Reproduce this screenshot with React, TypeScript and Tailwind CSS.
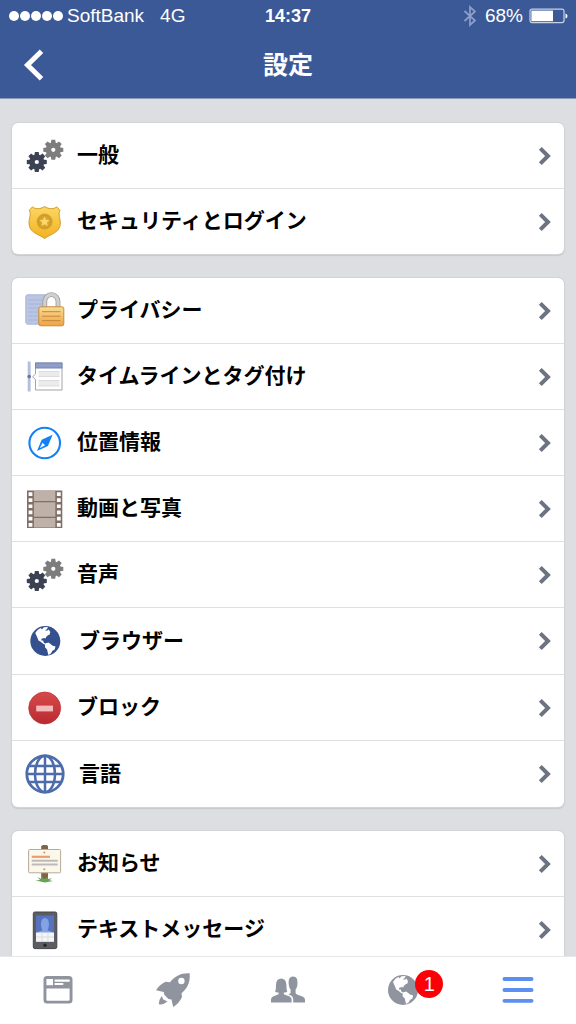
import React from 'react';

interface Item {
  id: string;
  label: string;
  icon: React.ReactNode;
  large?: boolean;
}

const TEETH = [0, 45, 90, 135, 180, 225, 270, 315];

const Gear: React.FC<{ x: number; y: number; fill: string }> = ({ x, y, fill }) => (
  <g transform={`translate(${x} ${y})`}>
    {TEETH.map(angle => (
      <path key={angle} d="M-2.6 -6 L-1.9 -10 H1.9 L2.6 -6 Z" fill={fill} transform={`rotate(${angle})`} />
    ))}
    <circle r="7.4" fill={fill} />
    <circle r="2.1" fill="#fff" />
  </g>
);

const Icon: React.FC<{ children: React.ReactNode }> = ({ children }) => (
  <svg viewBox="0 0 40 40" className="w-10 h-10 shrink-0" fill="none" aria-hidden="true">
    {children}
  </svg>
);

const GearsIcon = () => (
  <Icon>
    <Gear x={28.3} y={13.8} fill="#7d7d7d" />
    <Gear x={11.8} y={26} fill="#3c4253" />
  </Icon>
);

const BadgeIcon = () => (
  <Icon>
    <defs>
      <linearGradient id="badge" x1="0" y1="0" x2="0" y2="1">
        <stop offset="0" stopColor="#fbd763" />
        <stop offset="1" stopColor="#f2b21f" />
      </linearGradient>
    </defs>
    <path
      d="M7.5 4.8 C10 7.3 15 7.4 19.6 4.6 C24 7.4 29 7.3 31.7 4.8 L35 8.3 C32.8 12.5 35.3 16 35.3 21 C35.3 31 25 32 19.6 36.6 C14 32 4 31 4 21 C4 16 6.5 12.5 4.3 8.3 Z"
      fill="url(#badge)"
      stroke="#d29a2c"
      strokeLinejoin="round"
    />
    <circle cx="19.6" cy="19.6" r="8" fill="#d8a42d" />
    <circle cx="19.6" cy="19.6" r="6.3" stroke="#c8962a" strokeWidth="0.8" />
    <path d="M19.6 14.6 L21.1 17.8 L24.6 18.2 L22 20.6 L22.7 24 L19.6 22.3 L16.5 24 L17.2 20.6 L14.6 18.2 L18.1 17.8 Z" fill="#fbd869" />
  </Icon>
);

const PrivacyIcon = () => (
  <Icon>
    <defs>
      <linearGradient id="lockBody" x1="0" y1="0" x2="0" y2="1">
        <stop offset="0" stopColor="#f9dc94" />
        <stop offset="1" stopColor="#efa343" />
      </linearGradient>
    </defs>
    <rect x="0.8" y="3.8" width="27" height="29.4" rx="2" fill="#b9c5e2" stroke="#a9b6d6" />
    <path d="M3.5 9 H17 M3.5 13 H17 M3.5 17 H13 M3.5 21 H13 M3.5 25 H13 M3.5 29 H13" stroke="#a5b4da" />
    <path d="M19.8 16 V10.5 A6.6 6.8 0 0 1 33 10.5 V16" fill="#fff" stroke="#999" strokeWidth="4.8" />
    <path d="M19.8 16 V10.5 A6.6 6.8 0 0 1 33 10.5 V16" stroke="#d0d0d0" strokeWidth="3.2" />
    <rect x="13.8" y="15.8" width="25" height="19" rx="2" fill="url(#lockBody)" stroke="#c58a3c" />
    <path d="M17 20.7 H35.5 M17 25.2 H35.5 M17 29.7 H35.5" stroke="#bd7f33" strokeWidth="0.9" />
  </Icon>
);

const TimelineIcon = () => (
  <Icon>
    <rect x="2.7" y="4.5" width="2.9" height="30" fill="#b3bfdc" />
    <circle cx="4.2" cy="19.6" r="1.8" fill="#6675a6" />
    <path d="M10.5 6 H37 V33 H10.5 V22.6 L7.6 19.8 L10.5 17 Z" fill="#fff" stroke="#a3a3a8" />
    <rect x="10" y="5.5" width="27.5" height="6" fill="#7486b8" />
    <rect x="11" y="6.5" width="25.5" height="4" fill="#8e9dca" />
    <path d="M13.5 14.5 H34.5 V19.5 H13.5 Z M13.5 23.5 H34.5 V29 H13.5 Z" fill="#ebebed" />
    <path d="M13.5 14.5 H34.5 M13.5 19.5 H34.5 M13.5 23.5 H34.5 M13.5 29 H34.5" stroke="#d6d6da" strokeWidth="0.8" />
  </Icon>
);

const CompassIcon = () => (
  <Icon>
    <circle cx="19.7" cy="20" r="15.3" stroke="#1480f5" strokeWidth="2.1" />
    <path d="M27.6 11.8 L22.9 22.9 L12 28 L16.7 16.7 Z" fill="#1480f5" />
    <path d="M17.5 19.7 L20.1 22.3 L14.8 25.2 Z" fill="#fff" />
  </Icon>
);

const HOLES = [3.2, 9.3, 15.4, 21.6, 27.8, 34];

const FilmIcon = () => (
  <Icon>
    <rect x="2" y="1.5" width="35.3" height="37.5" fill="#806e67" />
    <path d="M8.9 2 H30.3 V12 H8.9 Z M8.9 13.2 H30.3 V27.8 H8.9 Z M8.9 29 H30.3 V38.6 H8.9 Z" fill="#bdb1a8" />
    {HOLES.map(y => (
      <path key={y} d={`M3.6 ${y} h3.8 v3.7 h-3.8 Z M31.9 ${y} h3.8 v3.7 h-3.8 Z`} fill="#fff" />
    ))}
  </Icon>
);

// Centred on 0,0 with a radius of 15
const Globe: React.FC<{ fill: string }> = ({ fill }) => (
  <g>
    <circle r="15" fill={fill} />
    <path
      d="M-10 -8 C-8.4 -10.8 -6.6 -12 -4.4 -13 L-3.4 -11.6 L-1.6 -13.8 L2.6 -14 L1.8 -12 L-0.4 -10.6 L2.2 -10.4 L3.4 -11.4 L5 -9 L4.4 -6.6 L2.6 -5.8 L0.8 -4 L0.2 -2.4 L-1.2 -3 L-3.8 -2.2 L-4 -0.4 L-2.2 -0.6 L-1.6 1.4 L-0.2 2.4 L3.2 1.6 L5.6 3.2 L7 4.4 L10.2 5.4 L9.4 8.4 L7.2 9.8 L5.6 12.4 L3 14 L2.2 10.6 L1.8 8.4 L-0.4 6.2 L-0.2 3.8 L-2.2 2.8 L-4.6 0.8 L-6.8 -0.6 L-8 -3.4 Z"
      fill="#fff"
    />
  </g>
);

const BrowserIcon = () => (
  <Icon>
    <g transform="translate(20.3 20)">
      <Globe fill="#34508f" />
    </g>
  </Icon>
);

const BlockIcon = () => (
  <Icon>
    <defs>
      <linearGradient id="block" x1="0" y1="0" x2="0" y2="1">
        <stop offset="0" stopColor="#d74a4a" />
        <stop offset="1" stopColor="#b92a31" />
      </linearGradient>
    </defs>
    <circle cx="19.7" cy="20" r="16" fill="url(#block)" stroke="#b5333a" strokeWidth="0.7" />
    <rect x="11.2" y="17.6" width="16.8" height="5.8" fill="#f3b9bb" />
  </Icon>
);

const LanguageIcon = () => (
  <Icon>
    <g stroke="#4c6cab" strokeWidth="2.5">
      <circle cx="20" cy="20" r="18.2" strokeWidth="2.8" />
      <ellipse cx="20" cy="20" rx="10" ry="18.2" />
      <path d="M20 2 V38 M2 20 H38 M4.5 12 H35.5 M4.5 28 H35.5" />
    </g>
  </Icon>
);

const NoticeIcon = () => (
  <Icon>
    <path d="M16.2 2 L18 1 H21.5 L23 2 V35.5 H16.2 Z" fill="#806445" />
    <rect x="3.6" y="5.5" width="32" height="23.3" rx="1" fill="#fbf7ea" stroke="#b5ab98" />
    <path d="M6.7 12.8 H25" stroke="#ee9c66" strokeWidth="2.2" />
    <path d="M6.7 16.7 H32.7 M6.7 20.6 H32.7" stroke="#c0b9bc" strokeWidth="2" />
    <circle cx="19.3" cy="8.4" r="1" fill="#c39a77" />
    <circle cx="19.3" cy="25.3" r="1" fill="#c39a77" />
    <path d="M10.5 36.5 L15 36 L12.5 33 L16.8 35.3 L17 32.5 L19.3 35.6 L22.7 32.5 L22.5 35.3 L27 34 L24.2 36.3 L28 37 L20 38.6 Z" fill="#62a552" />
  </Icon>
);

const PhoneIcon = () => (
  <Icon>
    <rect x="8.3" y="2" width="23.5" height="36.6" rx="1.6" fill="#5c5d61" stroke="#45464a" />
    <rect x="11" y="5.5" width="18" height="26.3" fill="#5673bd" />
    <path d="M11 25 C11.5 21.5 16 21.5 17.4 20 C15.5 17 15 8 20 8 C25 8 24.5 17 22.6 20 C24 21.5 28.5 21.5 29 25 Z" fill="#83a3e6" />
    <rect x="11" y="22.5" width="18" height="9.3" fill="#f4f5f8" />
    <path d="M17 22.5 V31.8 M23 22.5 V31.8 M11 27 H29" stroke="#cfd2da" strokeWidth="0.7" />
    <circle cx="20" cy="35.3" r="1.7" fill="#252629" />
  </Icon>
);

const groups: Item[][] = [
  [
    { id: 'general', label: '一般', icon: <GearsIcon /> },
    { id: 'security', label: 'セキュリティとログイン', icon: <BadgeIcon /> },
  ],
  [
    { id: 'privacy', label: 'プライバシー', icon: <PrivacyIcon /> },
    { id: 'timeline', label: 'タイムラインとタグ付け', icon: <TimelineIcon /> },
    { id: 'location', label: '位置情報', icon: <CompassIcon /> },
    { id: 'media', label: '動画と写真', icon: <FilmIcon /> },
    { id: 'sound', label: '音声', icon: <GearsIcon /> },
    { id: 'browser', label: 'ブラウザー', icon: <BrowserIcon />, large: true },
    { id: 'block', label: 'ブロック', icon: <BlockIcon /> },
    { id: 'language', label: '言語', icon: <LanguageIcon />, large: true },
  ],
  [
    { id: 'notifications', label: 'お知らせ', icon: <NoticeIcon /> },
    { id: 'sms', label: 'テキストメッセージ', icon: <PhoneIcon /> },
  ],
];

const StatusBar: React.FC = () => (
  <div className="h-8 px-2 grid grid-cols-[1fr_auto_1fr] items-center text-[19px] leading-8">
    <div className="flex items-center">
      <div className="flex gap-px pl-px">
        {[1, 2, 3, 4, 5].map(n => (
          <span key={n} className="w-[10px] h-[10px] rounded-full bg-white" />
        ))}
      </div>
      <span className="ml-1">SoftBank</span>
      <span className="ml-4">4G</span>
    </div>
    <div className="text-lg leading-8 font-bold">14:37</div>
    <div className="flex items-center justify-end">
      <svg viewBox="0 0 14 22" className="w-[14px] h-[22px] mr-2" fill="none" stroke="#8d9fc8" strokeWidth="1.7" aria-hidden="true">
        <path d="M1.5 6 L12 15.5 L7 20 V2 L12 6.5 L1.5 16" />
      </svg>
      <span>68%</span>
      <svg viewBox="0 0 39 16" className="w-[39px] h-4 ml-1.5" fill="none" aria-hidden="true">
        <rect x="1" y="1.2" width="34" height="13.4" rx="2" stroke="#c8d1e6" strokeWidth="1.2" />
        <rect x="2.4" y="2.6" width="21.6" height="10.6" fill="#fff" />
        <path d="M36.5 5.5 Q38.5 6 38.5 8 Q38.5 10 36.5 10.5 Z" fill="#fff" />
      </svg>
    </div>
  </div>
);

const SettingsRow: React.FC<{ item: Item }> = ({ item }) => (
  <li className="border-b border-[#dfe0e4] last:border-b-0">
    <a
      href={`#${item.id}`}
      className={`flex items-center pl-[13px] pr-3 ${item.large ? 'h-[66px] gap-[14px]' : 'h-[65px] gap-3'}`}
    >
      {item.icon}
      <span className="flex-1 text-[21px] leading-8 pb-px font-bold text-black">{item.label}</span>
      <svg viewBox="0 0 16 22" className="w-4 h-[22px]" fill="none" stroke="#6c7381" strokeWidth="4" aria-hidden="true">
        <path d="M4.3 3.3 L12 11 L4.3 18.7" />
      </svg>
    </a>
  </li>
);

const tabs = [
  {
    id: 'feed',
    label: 'ニュースフィード',
    icon: (
      <svg viewBox="0 0 30 30" className="w-[30px] h-[30px]" aria-hidden="true">
        <path
          fillRule="evenodd"
          fill="#8f949f"
          d="M4 1 H26 Q29.5 1 29.5 4.5 V25 Q29.5 28.5 26 28.5 H4 Q0.5 28.5 0.5 25 V4.5 Q0.5 1 4 1 Z M3.4 4 V10.3 H10 V4 Z M11.6 4.6 V6.7 H26.7 V4.6 Z M11.6 8 V10 H20.3 V8 Z M3.4 13.4 V24.6 Q3.4 25.8 4.6 25.8 H25.4 Q26.6 25.8 26.6 24.6 V13.4 Z"
        />
      </svg>
    ),
  },
  {
    id: 'explore',
    label: '探索',
    icon: (
      <svg viewBox="0 0 36 36" className="w-9 h-9" aria-hidden="true">
        <path
          fillRule="evenodd"
          fill="#8f949f"
          d="M34.6 1.2 C35.6 10.5 32 16.8 26.5 21.2 L27 25 Q24 31.5 18.2 35 L16.5 27.4 L13.5 27 L9.3 22.7 L8.7 20 L1 18.2 Q4.5 12.5 10.8 9.8 L15 10.2 C19.5 4.2 26 0.8 34.6 1.2 Z M26.4 5.8 A3.2 3.2 0 1 0 26.4 12.2 A3.2 3.2 0 1 0 26.4 5.8 Z"
        />
        <path fill="#8f949f" d="M6.7 24 L8.3 27.6 L12.5 29.6 Q8.5 33 3.8 32.3 Q4 27.3 6.7 24 Z" />
      </svg>
    ),
  },
  {
    id: 'friends',
    label: '友達',
    icon: (
      <svg viewBox="0 0 36 30" className="w-9 h-[30px]" fill="#8f949f" aria-hidden="true">
        <path d="M1 27.5 V24.5 Q1 22.4 3 21.6 L8.6 19.3 V17.6 C6.6 17.4 5.6 17 5.2 16.4 C6.2 14.5 5.8 12 6 9.6 C6.3 5.6 8 3.6 11.2 3.6 C14.4 3.6 16.1 5.6 16.4 9.6 C16.6 12 16.2 14.5 17.2 16.4 C16.8 17 15.8 17.4 13.8 17.6 V19.3 L19.6 21.6 Q21.6 22.4 21.6 24.5 V27.5 Z" />
        <path d="M18.8 9.8 C18.2 4.4 19.6 1.6 23.1 1.6 C26.6 1.6 28 4.4 27.4 9.8 C27.2 12 26.4 13.6 25.6 14.6 V18 Q25.8 18.8 27 19.4 L33 21.8 Q35 22.6 35 24.8 V27.5 H23.2 V24 Q23.2 21.4 21 20.4 L18.6 19.2 L20.6 18 V14.6 C19.8 13.6 19 12 18.8 9.8 Z" />
      </svg>
    ),
  },
  {
    id: 'notices',
    label: 'お知らせ',
    badge: 1,
    icon: (
      <svg viewBox="-16 -16 32 32" className="w-8 h-8" aria-hidden="true">
        <Globe fill="#8f949f" />
      </svg>
    ),
  },
  {
    id: 'menu',
    label: 'メニュー',
    icon: (
      <svg viewBox="0 0 32 28" className="w-8 h-7" stroke="#5c8ff0" strokeWidth="3.8" strokeLinecap="round" aria-hidden="true">
        <path d="M2.4 3 H29.6 M2.4 14 H29.6 M2.4 24.8 H29.6" />
      </svg>
    ),
  },
];

const TabBar: React.FC = () => (
  <nav className="h-17 shrink-0 grid grid-cols-5 pb-px bg-white border-t border-[#e6e7ea]">
    {tabs.map(tab => (
      <button key={tab.id} type="button" aria-label={tab.label} className="flex items-center justify-center">
        <span className="relative">
          {tab.icon}
          {tab.badge && (
            <span className="absolute -top-1 left-7 w-7 h-7 rounded-full bg-[#fb0007] text-white text-xl leading-7 text-center">
              {tab.badge}
            </span>
          )}
        </span>
      </button>
    ))}
  </nav>
);

export default function App() {
  return (
    <div className="h-screen flex flex-col bg-[#dcdee2] font-['Liberation_Sans','Noto_Sans_CJK_JP',sans-serif]">
      <header className="shrink-0 bg-[#3c5997] text-white border-b border-[#8d99b5]">
        <StatusBar />
        <div className="h-[66px] px-5 grid grid-cols-[1fr_auto_1fr] items-center">
          <button type="button" aria-label="戻る" className="justify-self-start">
            <svg viewBox="0 0 28 34" className="w-7 h-[34px]" fill="none" stroke="#fff" strokeWidth="5" aria-hidden="true">
              <path d="M21.5 3.3 L7.5 17 L21.5 30.7" />
            </svg>
          </button>
          <h1 className="text-[25px] leading-8 font-bold">設定</h1>
        </div>
      </header>
      <main className="flex-1 min-h-0 overflow-y-auto [scrollbar-width:none] px-3 py-6 flex flex-col gap-6">
        {groups.map((group, i) => (
          <ul key={i} className="shrink-0 bg-white rounded-md shadow-[0_0_0_1px_#d2d4d8,0_1px_1px_1px_#c6c8cc]">
            {group.map(item => (
              <SettingsRow key={item.id} item={item} />
            ))}
          </ul>
        ))}
      </main>
      <TabBar />
    </div>
  );
}
